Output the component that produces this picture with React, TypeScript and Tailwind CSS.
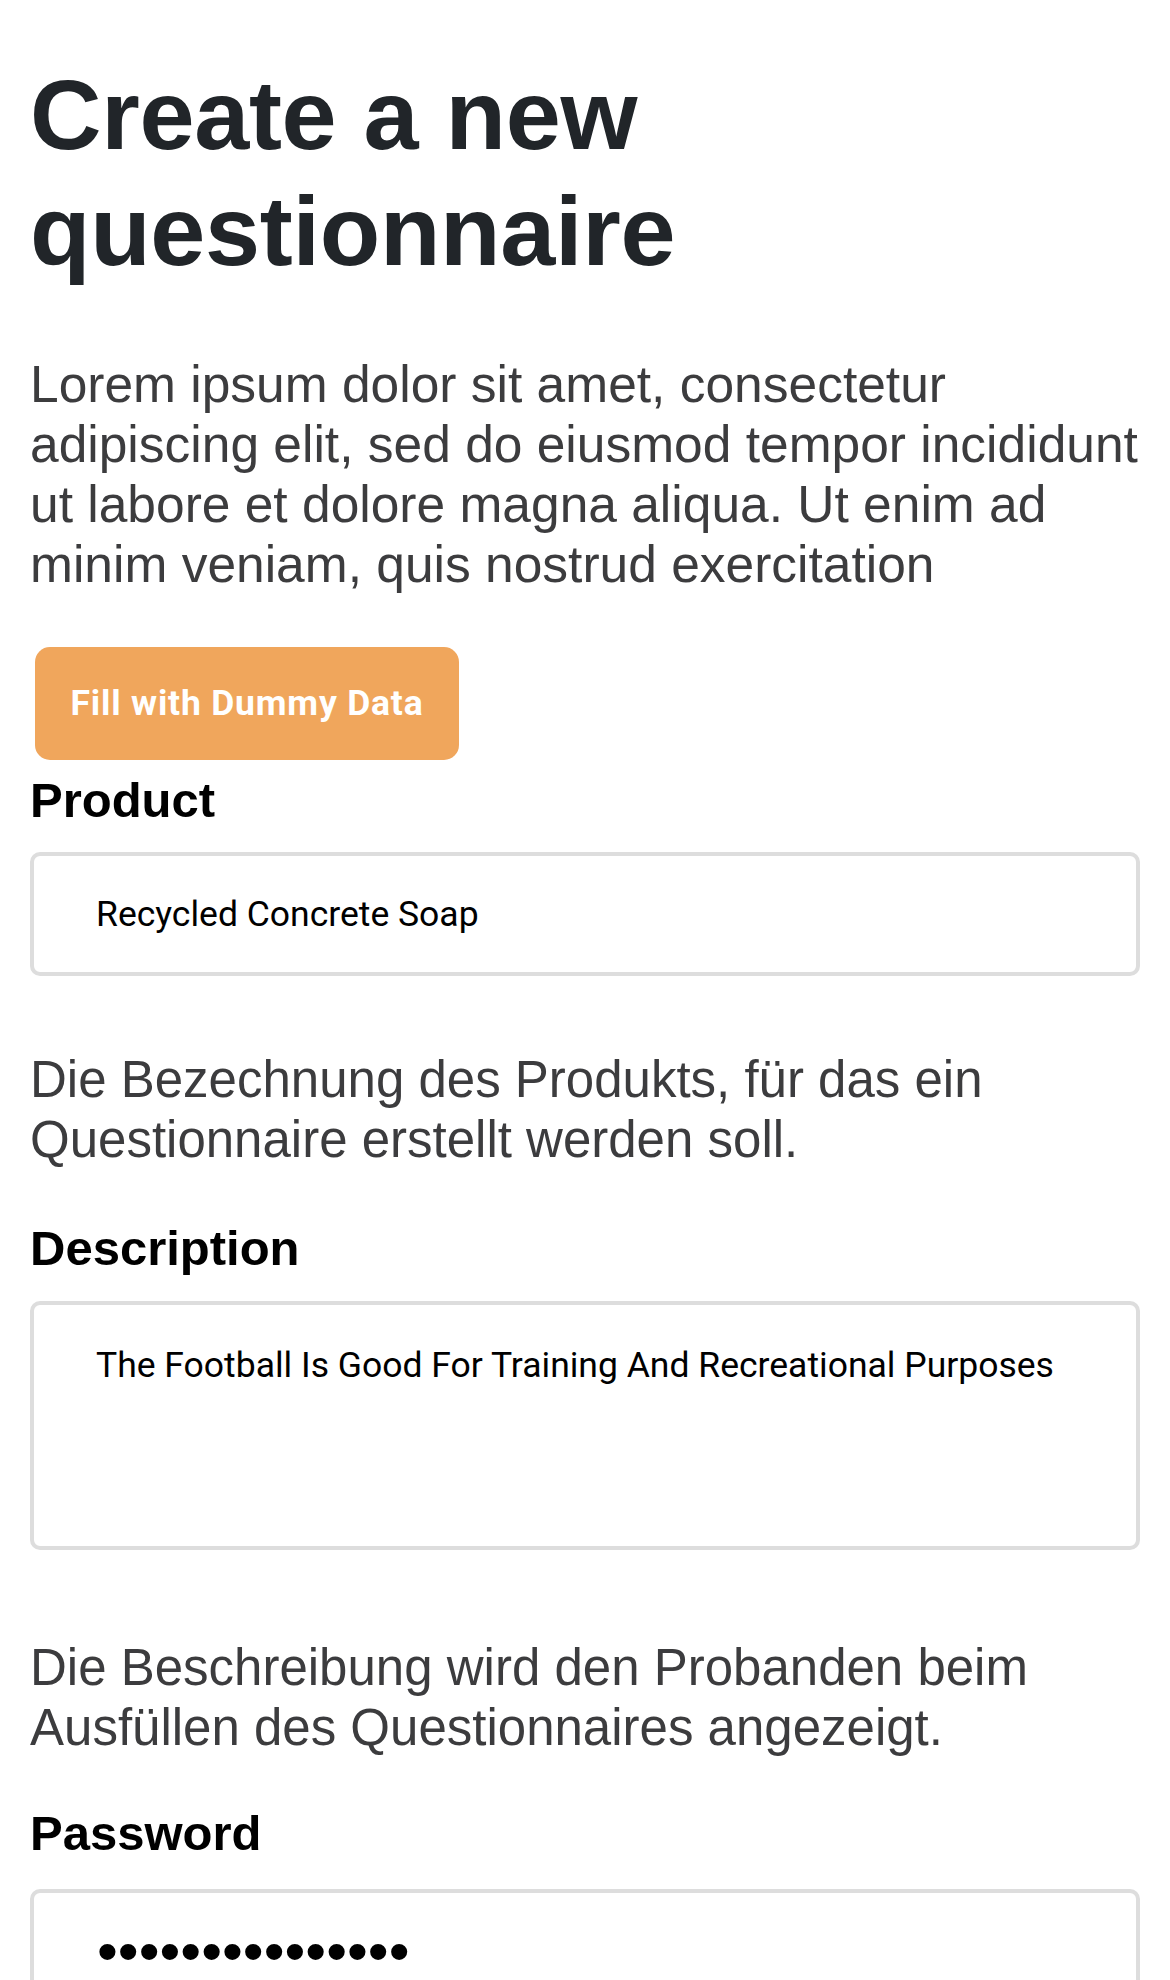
import { ReactNode } from "react";

// Field label
const Label = ({ children, className = "" }: { children: ReactNode; className?: string }) => (
    <label className={`block text-[49px] leading-[60px] font-bold text-black ${className}`}>{children}</label>
);

// Helper text under a field
const Hint = ({ children, className = "" }: { children: ReactNode; className?: string }) => (
    <p className={`text-[51px] leading-[60px] text-[#3c3c3e] ${className}`}>{children}</p>
);

const fieldClass =
    "block w-full rounded-[10px] border-4 border-[#dddddd] bg-white pl-[62px] pr-[63px] text-[35.5px] leading-[40px] text-black outline-none [font-family:Roboto,'Liberation_Sans',sans-serif]";

export default function App() {
    return (
        <div className="min-h-screen bg-white [font-family:'Liberation_Sans',Arial,sans-serif]">
            <main className="px-[30px] pt-[57px] pb-10">
                <h1 className="text-[99px] leading-[116px] font-bold tracking-[-0.3px] text-[#212529]">
                    Create a new questionnaire
                </h1>

                <p className="mt-[65px] -mr-[10px] text-[51.5px] leading-[60px] text-[#3c3c3e]">
                    Lorem ipsum dolor sit amet, consectetur adipiscing elit, sed do eiusmod tempor incididunt ut
                    labore et dolore magna aliqua. Ut enim ad minim veniam, quis nostrud exercitation
                </p>

                <button
                    type="button"
                    className="mt-[53px] ml-[5px] flex h-[113px] w-[424px] items-center justify-center rounded-[15px] bg-[#f0a65c] text-[35.5px] font-bold tracking-[0.8px] text-white [font-family:Roboto,'Liberation_Sans',sans-serif]"
                >
                    Fill with Dummy Data
                </button>

                <form className="flex flex-col">
                    <Label className="mt-[10px]">Product</Label>
                    <input
                        className={`${fieldClass} mt-[22px] h-[124px]`}
                        defaultValue="Recycled Concrete Soap"
                    />
                    <Hint className="mt-[74px]">
                        Die Bezechnung des Produkts, für das ein Questionnaire erstellt werden soll.
                    </Hint>

                    <Label className="mt-[48px]">Description</Label>
                    <textarea
                        className={`${fieldClass} mt-[23px] h-[249px] resize-none py-[40px]`}
                        defaultValue="The Football Is Good For Training And Recreational Purposes"
                    />
                    <Hint className="mt-[88px]">
                        Die Beschreibung wird den Probanden beim Ausfüllen des Questionnaires angezeigt.
                    </Hint>

                    <Label className="mt-[45px]">Password</Label>
                    <input
                        type="text"
                        readOnly
                        className="mt-[26px] block h-[124px] w-full rounded-[10px] border-4 border-[#dddddd] bg-white px-[63px] text-[59.5px] leading-[60px] text-black outline-none [font-family:'Liberation_Sans',Arial,sans-serif]"
                        defaultValue="•••••••••••••••"
                    />
                </form>
            </main>
        </div>
    );
}
